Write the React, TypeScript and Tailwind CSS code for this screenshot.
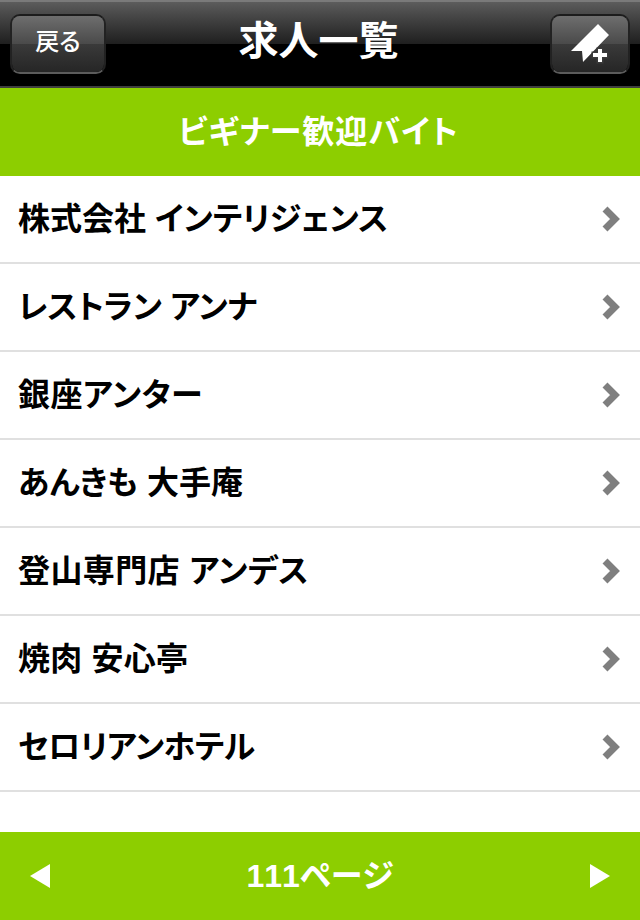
const font = { fontFamily: '"Liberation Sans", "Noto Sans CJK JP", sans-serif' }

const jobs = [
  { name: '株式会社 インテリジェンス', spacing: '' },
  { name: 'レストラン アンナ', spacing: 'tracking-[-0.3px]' },
  { name: '銀座アンター', spacing: 'tracking-[0.5px]' },
  { name: 'あんきも 大手庵', spacing: '' },
  { name: '登山専門店 アンデス', spacing: 'tracking-[0.4px]' },
  { name: '焼肉 安心亭', spacing: 'tracking-[0.2px]' },
  { name: 'セロリアンホテル', spacing: 'tracking-[-0.6px]' },
]

function NavButton({ className, children }: { className: string; children: React.ReactNode }) {
  return (
    <div className={`relative h-[60px] mt-px rounded-[10px] border-2 border-t-[#1c1c1c] border-x-[#222222] border-b-[#5c5c5c] overflow-hidden flex items-center justify-center ${className}`}>
      <div className="absolute inset-x-0 top-0 h-[28px] bg-gradient-to-b from-[#6e6e6e] to-[#4a4a4a]" />
      <div className="absolute inset-x-0 bottom-0 h-[28px] bg-gradient-to-b from-[#3a3a3a] to-[#262626]" />
      <div className="relative">{children}</div>
    </div>
  )
}

export default function App() {
  return (
    <div className="w-[640px] h-[920px] bg-white flex flex-col font-bold [font-feature-settings:'palt']" style={font}>
      {/* navigation bar */}
      <div className="relative h-[88px] bg-black border-b-2 border-[#3f3f3f]">
        <div className="absolute inset-x-0 top-0 h-[44px] border-t-2 border-[#7a7a7a] bg-gradient-to-b from-[#5c5c5c] to-[#1f1f1f]" />
        <div className="relative h-full grid grid-cols-[1fr_auto_1fr] items-center px-[10px]">
          <NavButton className="w-[96px]">
            <span className="text-white text-[24px] font-medium leading-none">戻る</span>
          </NavButton>
          <span className="text-white text-[40px] leading-none pr-[3px] pb-[4px]">求人一覧</span>
          <NavButton className="w-[80px] justify-self-end">
            <svg width="48" height="48" viewBox="566 21 48 48" className="block">
              <path d="M598 25 L609 36 L583 63 L582 52 L571 52 Z" fill="#fff" />
              <path d="M598 50h4v4h5v4h-5v5h-4v-5h-5v-4h5z" fill="#fff" stroke="#3a3a3a" strokeWidth="3" paintOrder="stroke" />
            </svg>
          </NavButton>
        </div>
      </div>

      {/* category title */}
      <div className="h-[88px] bg-[#8dce00] flex items-center justify-center text-white text-[32px] leading-none tracking-[1.1px] pr-[3px]">
        ビギナー歓迎バイト
      </div>

      {/* job list */}
      <ul className="flex-1">
        {jobs.map((job) => (
          <li key={job.name} className="h-[88px] border-b-2 border-[#e0e0e0] flex items-center justify-between pl-[18px] pr-[19px] text-black text-[32px] leading-none">
            <span className={job.spacing}>{job.name}</span>
            <svg width="20" height="28" viewBox="0 0 20 28">
              <path d="M4 4 L14 14 L4 24" fill="none" stroke="#7f7f7f" strokeWidth="7" strokeLinejoin="miter" />
            </svg>
          </li>
        ))}
      </ul>

      {/* pager */}
      <div className="h-[88px] bg-[#8dce00] flex items-center justify-between px-[30px] text-white text-[32px] leading-none">
        <svg width="20" height="24" viewBox="0 0 20 24">
          <path d="M0 12 L20 0 V24 Z" fill="#fff" />
        </svg>
        <span className="[font-kerning:none]">111ページ</span>
        <svg width="20" height="24" viewBox="0 0 20 24">
          <path d="M20 12 L0 0 V24 Z" fill="#fff" />
        </svg>
      </div>
    </div>
  )
}
